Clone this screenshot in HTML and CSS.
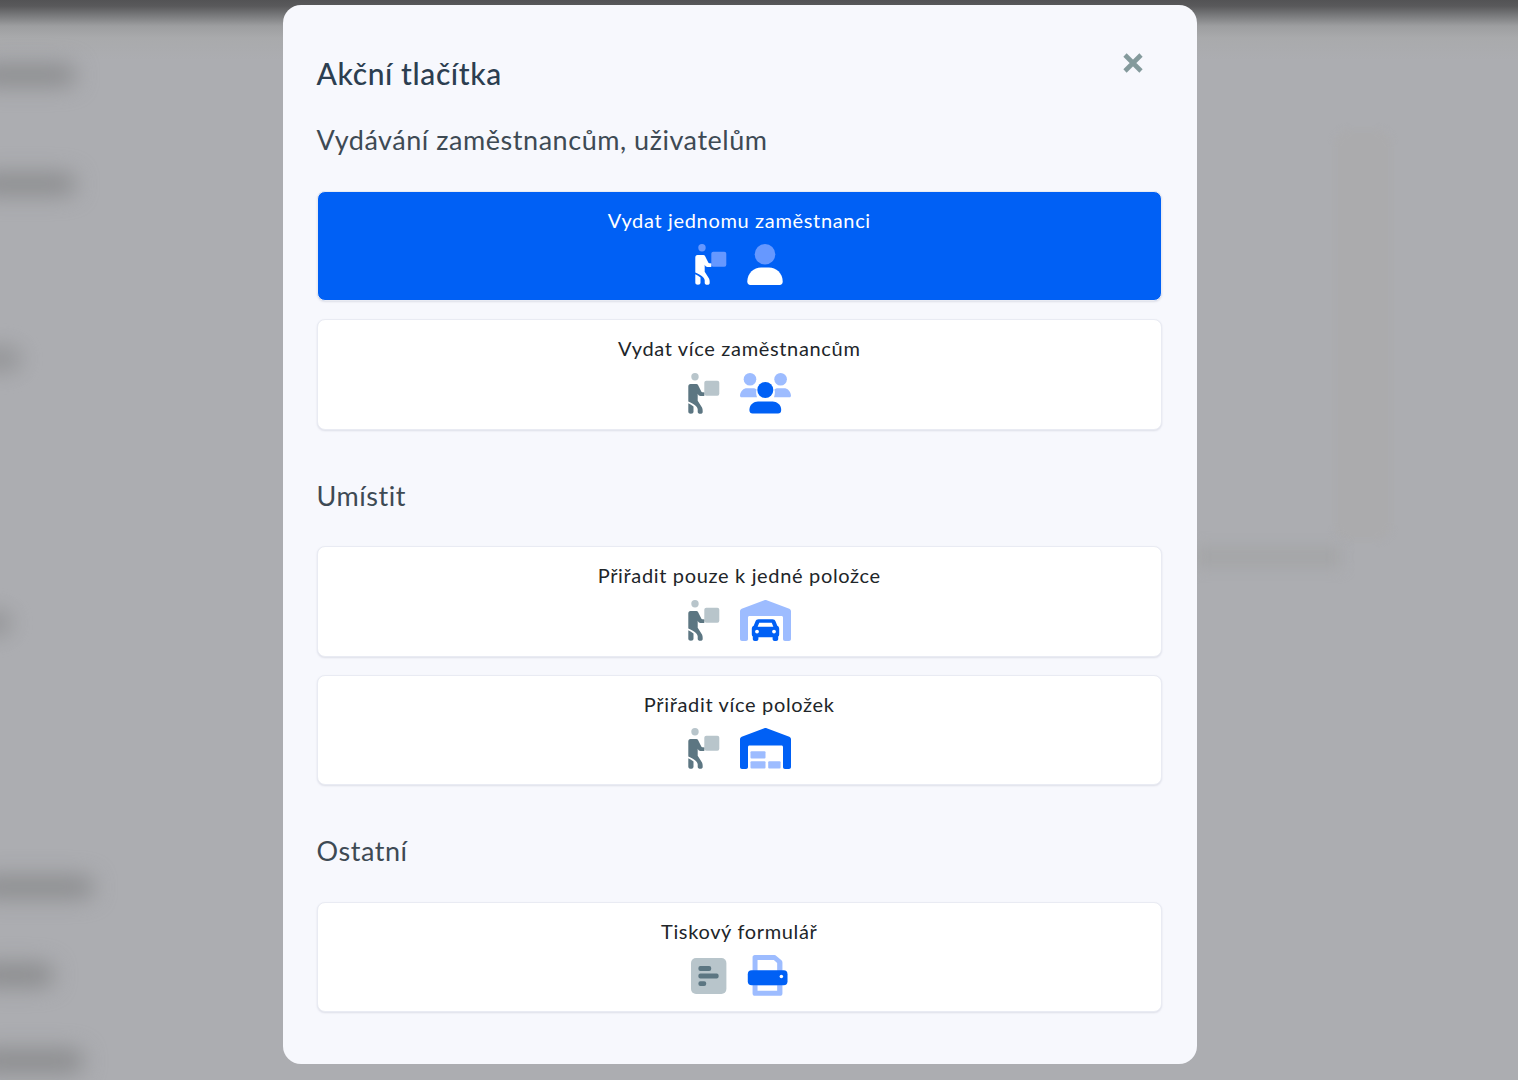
FILE: index.html
```html
<!DOCTYPE html>
<html lang="cs">
<head>
<meta charset="utf-8">
<title>Akční tlačítka</title>
<link rel="stylesheet" href="styles.css">
</head>
<body>
<svg class="defs" width="0" height="0" aria-hidden="true">
  <defs>
    <symbol id="worker" viewBox="0 0 33 41">
      <circle class="tone-b" cx="8" cy="3.7" r="3.7"/>
      <rect class="tone-b" x="17.3" y="7.7" width="15" height="15" rx="2"/>
      <path class="tone-a" d="M3.5 11H9.5C10.5 11 11 11.8 11.4 12.8L14.3 18.6C14.7 19.2 15.5 19.4 17.3 19.4V23H13.5C12.2 23 11.4 22.2 10.7 20.8V27.8L15 34.6C15.6 35.8 15.7 37.4 15.7 38.8C15.7 40.2 14.9 40.8 13.3 40.8C11.6 40.8 10.8 40.2 10.7 38.8V36.2C10.7 34 7.5 30.8 1.3 28.4V13.5C1.3 12 2 11 3.5 11Z"/>
      <path class="tone-a" d="M1.3 30.2C3.2 31 5 32.1 6.5 33.5V38.8C6.5 40.1 5.5 40.8 3.9 40.8C2.3 40.8 1.3 40.1 1.3 38.8Z"/>
    </symbol>
    <symbol id="person" viewBox="0 0 36 41">
      <circle class="tone-b" cx="18" cy="10.3" r="10.3"/>
      <path class="tone-a" d="M0.3 37.5C0.3 29 7 23.4 14 23.4H22C29 23.4 35.7 29 35.7 37.5C35.7 39.6 34.6 41 32.6 41H3.4C1.4 41 0.3 39.6 0.3 37.5Z"/>
    </symbol>
    <symbol id="group" viewBox="0 0 51 41">
      <circle class="tone-b" cx="10" cy="6.3" r="6.3"/>
      <circle class="tone-b" cx="40.6" cy="6.3" r="6.3"/>
      <path class="tone-b" d="M0 22.5C0.5 18 3.5 15.3 7 15.3H13C14.5 15.3 15.6 15.8 16.6 16.6C15.8 18.6 16 21.4 17 24.3H1.6C0.5 24.3 0 23.6 0 22.5Z"/>
      <path class="tone-b" d="M51 22.5C50.5 18 47.5 15.3 44 15.3H38C36.5 15.3 35.4 15.8 34.4 16.6C35.2 18.6 35 21.4 34 24.3H49.4C50.5 24.3 51 23.6 51 22.5Z"/>
      <circle class="tone-c" cx="25.3" cy="17" r="8"/>
      <path class="tone-c" d="M9.4 37C9.4 31.5 14 28.6 18 28.6H32.6C36.6 28.6 41.2 31.5 41.2 37C41.2 39.3 40 40.6 38 40.6H12.6C10.6 40.6 9.4 39.3 9.4 37Z"/>
    </symbol>
    <symbol id="garage" viewBox="0 0 51 41">
      <path class="tone-b" d="M24.3 0.3C25 0 26 0 26.7 0.3L49.3 8.8C50.3 9.2 51 10.2 51 11.4V39C51 40.2 50.2 41 49 41H45C43.8 41 43 40.2 43 39V17.5C43 16.6 42.4 16 41.5 16H9.5C8.6 16 8 16.6 8 17.5V39C8 40.2 7.2 41 6 41H2C0.8 41 0 40.2 0 39V11.4C0 10.2 0.7 9.2 1.7 8.8Z"/>
      <path class="tone-c" d="M18.5 19.3H32.5C34 19.3 35 20 35.6 21.5L37.3 25.7C38.6 26.4 39.2 27.5 39.2 28.8V34.5C39.2 35.4 38.8 36 38.2 36.4V39C38.2 40.2 37.4 41 36.2 41H34.6C33.4 41 32.6 40.2 32.6 39V37.3H18.4V39C18.4 40.2 17.6 41 16.4 41H14.8C13.6 41 12.8 40.2 12.8 39V36.4C12.2 36 11.8 35.4 11.8 34.5V28.8C11.8 27.5 12.4 26.4 13.7 25.7L15.4 21.5C16 20 17 19.3 18.5 19.3Z"/>
      <path class="tone-w" d="M19.3 22.8H31.7L33.4 26.8H17.6Z"/>
      <circle class="tone-w" cx="17" cy="31.6" r="1.9"/>
      <circle class="tone-w" cx="34" cy="31.6" r="1.9"/>
    </symbol>
    <symbol id="warehouse" viewBox="0 0 51 41">
      <path class="tone-c" d="M24.3 0.3C25 0 26 0 26.7 0.3L49.3 8.8C50.3 9.2 51 10.2 51 11.4V39C51 40.2 50.2 41 49 41H45C43.8 41 43 40.2 43 39V19C43 18.1 42.4 17.5 41.5 17.5H9.5C8.6 17.5 8 18.1 8 19V39C8 40.2 7.2 41 6 41H2C0.8 41 0 40.2 0 39V11.4C0 10.2 0.7 9.2 1.7 8.8Z"/>
      <rect class="tone-b" x="10.5" y="23.2" width="15" height="7.4" rx="1"/>
      <rect class="tone-b" x="10.5" y="33.2" width="15" height="7.4" rx="1"/>
      <rect class="tone-b" x="28.2" y="33.2" width="12.4" height="7.4" rx="1"/>
    </symbol>
    <symbol id="form" viewBox="0 0 36 36">
      <rect class="tone-b" x="0" y="0" width="35.4" height="36" rx="5"/>
      <rect class="tone-a" x="7.4" y="8" width="12.8" height="5" rx="2"/>
      <rect class="tone-a" x="7.4" y="15.6" width="20.2" height="5" rx="2"/>
      <rect class="tone-a" x="7.4" y="23.3" width="7.8" height="4.8" rx="2"/>
    </symbol>
    <symbol id="printer" viewBox="0 0 41 42">
      <path class="tone-b" d="M7.5 0H27.5C28.3 0 29 0.3 29.6 0.9L34.8 5.5C35.5 6.2 35.8 6.9 35.8 7.7V17H30.4V8.2L27 5H10.3V17H5.2V2.3C5.2 1 6.2 0 7.5 0Z"/>
      <path class="tone-b" d="M5.2 27H35.8V39.4C35.8 40.8 34.8 41.8 33.5 41.8H7.5C6.2 41.8 5.2 40.8 5.2 39.4ZM10.3 31V36.6H30.4V31Z" fill-rule="evenodd"/>
      <rect class="tone-c" x="0.3" y="15.7" width="40.7" height="15.3" rx="4"/>
      <circle class="tone-w" cx="34.7" cy="22" r="1.8"/>
    </symbol>
  </defs>
</svg>

<div class="backdrop" aria-hidden="true">
  <span class="blob blob-1"></span>
  <span class="blob blob-2"></span>
  <span class="blob blob-3"></span>
  <span class="blob blob-4"></span>
  <span class="blob blob-5"></span>
  <span class="blob blob-6"></span>
  <span class="blob blob-7"></span>
  <span class="panel-edge"></span>
  <span class="panel-strip"></span>
</div>

<main class="modal">
  <button class="close" type="button" aria-label="Zavřít">
    <svg width="22" height="22" viewBox="0 0 22 22"><path d="M3 3L19 19M19 3L3 19"/></svg>
  </button>
  <h1 class="title">Akční tlačítka</h1>

  <section class="group group-first">
    <h2 class="heading">Vydávání zaměstnancům, uživatelům</h2>
    <div class="cards">
      <a class="card card-primary">
        <span class="label">Vydat jednomu zaměstnanci</span>
        <span class="icons">
          <svg class="icon-worker"><use href="#worker"/></svg>
          <svg class="icon-person"><use href="#person"/></svg>
        </span>
      </a>
      <a class="card">
        <span class="label">Vydat více zaměstnancům</span>
        <span class="icons">
          <svg class="icon-worker"><use href="#worker"/></svg>
          <svg class="icon-wide"><use href="#group"/></svg>
        </span>
      </a>
    </div>
  </section>

  <section class="group">
    <h2 class="heading">Umístit</h2>
    <div class="cards">
      <a class="card">
        <span class="label">Přiřadit pouze k jedné položce</span>
        <span class="icons">
          <svg class="icon-worker"><use href="#worker"/></svg>
          <svg class="icon-wide"><use href="#garage"/></svg>
        </span>
      </a>
      <a class="card">
        <span class="label">Přiřadit více položek</span>
        <span class="icons">
          <svg class="icon-worker"><use href="#worker"/></svg>
          <svg class="icon-wide"><use href="#warehouse"/></svg>
        </span>
      </a>
    </div>
  </section>

  <section class="group">
    <h2 class="heading">Ostatní</h2>
    <div class="cards">
      <a class="card">
        <span class="label">Tiskový formulář</span>
        <span class="icons">
          <svg class="icon-form"><use href="#form"/></svg>
          <svg class="icon-printer"><use href="#printer"/></svg>
        </span>
      </a>
    </div>
  </section>
</main>
</body>
</html>
```

FILE: styles.css
```css
* { box-sizing: border-box; }

html, body {
  margin: 0;
  height: 100%;
  overflow: hidden;
}

body {
  background: #acadb1;
  font-family: Lato, "Noto Sans", sans-serif;
  color: #212529;
}

.defs { position: absolute; }

.backdrop {
  position: fixed;
  inset: 0;
  overflow: hidden;
  background: linear-gradient(#535355 0, #59595b 6px, #77787a 15px, #9d9ea0 26px, #a9aaac 38px, #acadb1 60px);
}

.blob {
  position: absolute;
  background: #8b8c8e;
  border-radius: 14px;
  filter: blur(11px);
}
.blob-1 { left: -24px; top: 64px; width: 100px; height: 22px; }
.blob-2 { left: -24px; top: 173px; width: 100px; height: 22px; }
.blob-3 { left: -24px; top: 346px; width: 46px; height: 26px; opacity: .7; }
.blob-4 { left: -24px; top: 610px; width: 36px; height: 26px; opacity: .7; }
.blob-5 { left: -24px; top: 876px; width: 118px; height: 22px; }
.blob-6 { left: -24px; top: 963px; width: 78px; height: 24px; }
.blob-7 { left: -24px; top: 1049px; width: 108px; height: 24px; }

.panel-edge {
  position: absolute;
  left: 1335px;
  top: 130px;
  width: 56px;
  height: 410px;
  background: #ababad;
  border-radius: 14px;
  filter: blur(3px);
}

.panel-strip {
  position: absolute;
  left: 1196px;
  top: 546px;
  width: 145px;
  height: 22px;
  background: #a5a6a8;
  filter: blur(7px);
}

.modal {
  position: relative;
  width: 914px;
  height: 1059px;
  margin: 5px 0 0 282.5px;
  padding: 50px 34.5px 0 34px;
  background: #f7f8fd;
  border-radius: 18px;
}

.close {
  position: absolute;
  top: 47px;
  left: 839.5px;
  width: 22px;
  height: 22px;
  padding: 0;
  border: 0;
  background: none;
  line-height: 0;
}
.close path {
  fill: none;
  stroke: #849a9c;
  stroke-width: 4.6;
}

.title {
  margin: 0;
  font-size: 30px;
  line-height: 36px;
  font-weight: 500;
  letter-spacing: .6px;
  color: #2c3e50;
}

.heading {
  margin: 0 0 34.6px;
  font-size: 27px;
  line-height: 32px;
  font-weight: 400;
  letter-spacing: .54px;
  color: #3e4a54;
}

.group { margin-top: 49.8px; }
.group-first { margin-top: 33.4px; }

.cards {
  display: flex;
  flex-direction: column;
  gap: 18px;
}

.card {
  display: flex;
  flex-direction: column;
  align-items: center;
  height: 110.5px;
  padding-top: 15px;
  background: #fff;
  border: 1px solid #e9ebf3;
  border-radius: 8px;
  box-shadow: 0 1px 2px rgba(120, 125, 150, .2);
  --a: #5c7682;
  --b: #b8c5cb;
  --c: #0060f5;
  --w: #fff;
  --b2: #9dbcff;
}

.card-primary {
  background: #0060f5;
  color: #fff;
  --a: #fff;
  --b: #6698ff;
  --w: #0060f5;
}

.label {
  font-size: 20px;
  line-height: 26px;
  letter-spacing: .66px;
}

.icons {
  display: flex;
  align-items: flex-start;
  gap: 20px;
  margin-top: 11.5px;
}

.card-primary .icons { margin-right: 2px; }

.icons svg { display: block; height: 41px; }
.icon-worker { width: 33px; }
.icon-person { width: 36px; }
.icon-wide { width: 51px; --b: var(--b2); }
.icons .icon-form { width: 36px; height: 36px; margin-top: 3px; }
.icon-printer { width: 41px; --b: var(--b2); }

.tone-a { fill: var(--a); }
.tone-b { fill: var(--b); }
.tone-c { fill: var(--c); }
.tone-w { fill: var(--w); }
```
